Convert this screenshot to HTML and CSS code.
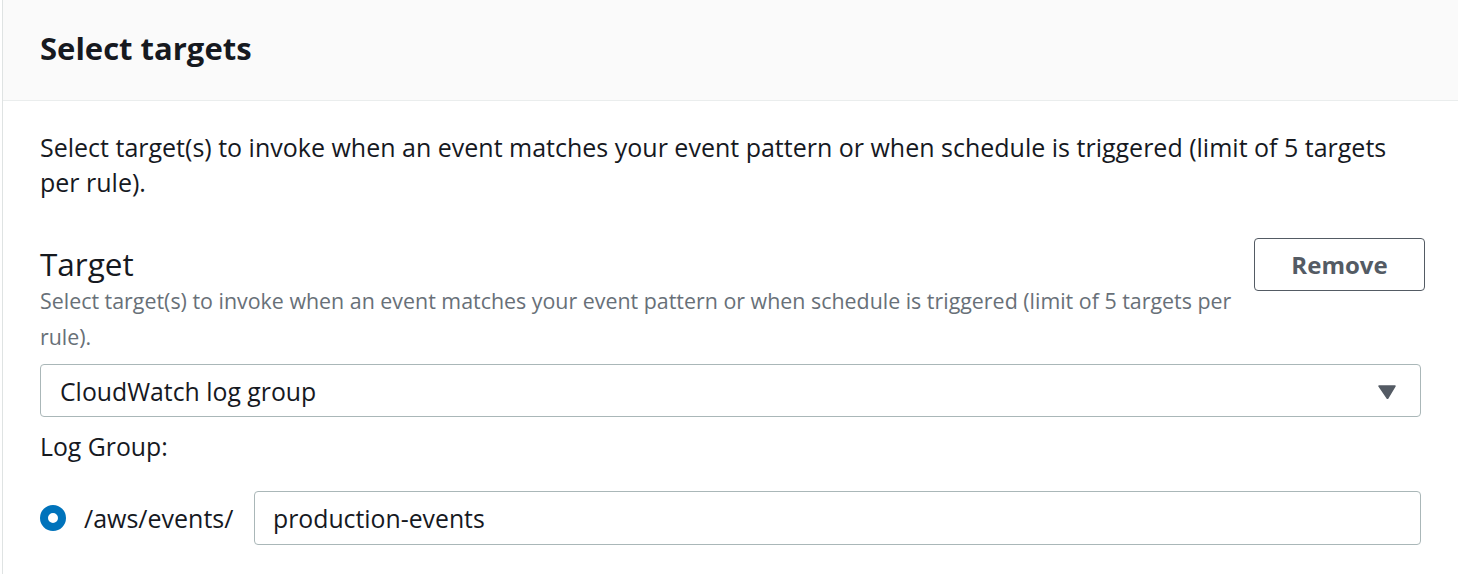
FILE: index.html
```html
<html lang="en">
  <head>
    <meta charset="UTF-8" />
    <meta name="viewport" content="width=device-width, initial-scale=1.0" />
    <title>Select targets</title>
    <link rel="stylesheet" href="styles.css">
  </head>
  <body>
    <div class="panel">
      <div class="panel-header">
        <h2>Select targets</h2>
      </div>
      <div class="panel-body">
        <p class="intro">Select target(s) to invoke when an event matches your event pattern or when schedule is triggered (limit of 5 targets per rule).</p>

        <div class="target">
          <div class="target-head">
            <div class="target-info">
              <h3>Target</h3>
              <p class="hint">Select target(s) to invoke when an event matches your event pattern or when schedule is triggered (limit of 5 targets per rule).</p>
            </div>
            <button class="btn">Remove</button>
          </div>

          <div class="select">
            <span>CloudWatch log group</span>
            <svg class="caret" width="18" height="14" viewBox="0 0 18 14">
              <path d="M1 1 H17 L9.5 13.5 Z" fill="#545b64" stroke="#545b64" stroke-width="1.5" stroke-linejoin="round"/>
            </svg>
          </div>

          <div class="label">Log Group:</div>

          <div class="log-row">
            <span class="radio"></span>
            <span class="prefix">/aws/events/</span>
            <div class="input">production-events</div>
          </div>
        </div>
      </div>
    </div>
  </body>
</html>
```

FILE: styles.css
```css
*,
*::after,
*::before {
  margin: 0;
  padding: 0;
  box-sizing: border-box;
}

:root {
  --text: #16191f;
  --muted: #687078;
  --control-border: #aab7b8;
  --blue: #0073bb;
}

body {
  font-family: "Open Sans", "Noto Sans", sans-serif;
  color: var(--text);
  background: #fff;
}

.panel {
  margin-left: 2px;
  border-left: 1px solid #dfe3e3;
  min-height: 574px;
}

.panel-header {
  height: 101px;
  background: #fafafa;
  border-bottom: 1px solid #eaeded;
  display: flex;
  align-items: center;
  padding: 0 37px;
}

.panel-header h2 {
  font-size: 31px;
  font-weight: 700;
  margin-top: -4px;
}

.panel-body {
  padding: 29px 37px 0 37px;
}

.intro {
  font-size: 25px;
  line-height: 35px;
}

.target {
  margin-top: 38px;
}

.target-head {
  display: flex;
  justify-content: space-between;
  align-items: flex-start;
}

.target-info {
  width: 1205px;
}

.target-info h3 {
  font-size: 31.5px;
  font-weight: 400;
  line-height: 38px;
  margin-top: 7px;
}

.hint {
  font-size: 21.4px;
  line-height: 36px;
  color: var(--muted);
}

.btn {
  width: 171px;
  height: 53px;
  margin-right: -4px;
  border: 1px solid #545b64;
  border-radius: 4px;
  background: #fff;
  color: #545b64;
  font-family: inherit;
  font-size: 24px;
  font-weight: 700;
}

.select {
  margin-top: 9px;
  height: 53px;
  border: 1px solid var(--control-border);
  border-radius: 4px;
  display: flex;
  align-items: center;
  justify-content: space-between;
  padding: 0 24px 0 19px;
  font-size: 24.8px;
}

.caret {
  margin-top: 2px;
}

.label {
  margin-top: 12px;
  font-size: 24.8px;
  line-height: 34px;
}

.log-row {
  margin-top: 28px;
  display: flex;
  align-items: center;
}

.radio {
  width: 26px;
  height: 26px;
  border-radius: 50%;
  border: 8px solid var(--blue);
  background: #fff;
  flex: none;
}

.prefix {
  margin-left: 18px;
  font-size: 25px;
  width: 170px;
}

.input {
  flex: 1;
  height: 54px;
  border: 1px solid var(--control-border);
  border-radius: 4px;
  display: flex;
  align-items: center;
  padding: 0 18px;
  font-size: 24.8px;
}
```
